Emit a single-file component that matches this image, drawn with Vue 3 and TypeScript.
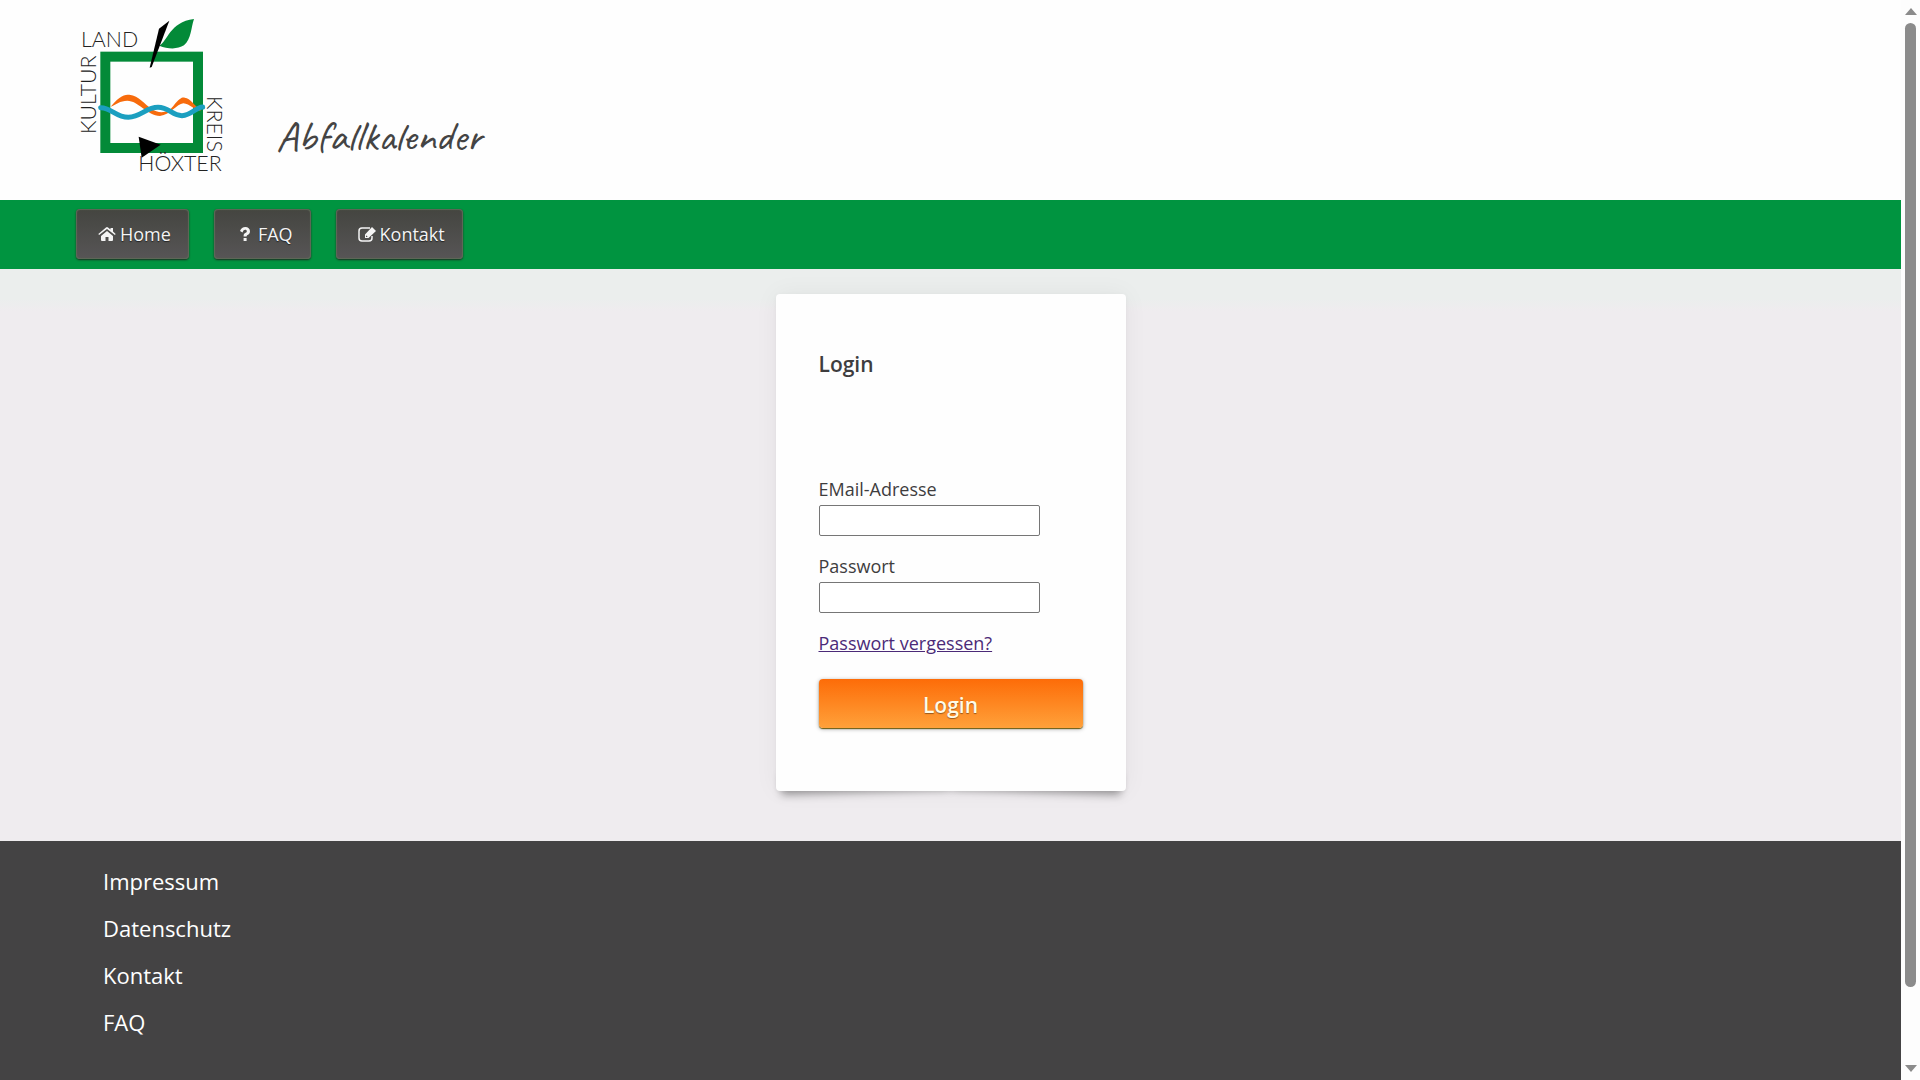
<script setup lang="ts">
import { ref } from 'vue'

interface NavItem {
  label: string
  icon: 'home' | 'question' | 'edit'
}

const navItems: NavItem[] = [
  { label: 'Home', icon: 'home' },
  { label: 'FAQ', icon: 'question' },
  { label: 'Kontakt', icon: 'edit' },
]

const footerLinks: string[] = ['Impressum', 'Datenschutz', 'Kontakt', 'FAQ']

const email = ref('')
const password = ref('')
</script>

<template>
  <div class="window">
    <div class="page">
      <header class="header">
        <svg class="logo" viewBox="24 30 498 510" role="img" aria-label="Kulturland Kreis Höxter">
          <rect x="136" y="170" width="278" height="274" fill="none" stroke="#038a38" stroke-width="30" />
          <path d="M298 137C322 126 328 66 402 57C393 82 394 118 372 136C352 149 323 147 298 137Z" fill="#038a38" />
          <path d="M328 62L297 86L269 203L275 201Z" fill="#000" />
          <path d="M152 320C180 286 194 284 208 284C238 288 252 312 274 326C296 342 324 340 340 318C358 296 364 292 374 293C392 296 402 314 424 334C402 330 390 312 370 310C350 312 332 344 300 348C262 346 234 302 202 302C180 302 168 314 152 320Z" fill="#f76b0c" />
          <path d="M122 323C152 322 168 352 205 352C244 350 258 322 294 322C328 322 336 347 366 347C396 346 406 322 428 321" fill="none" stroke="#1b9fc0" stroke-width="15" stroke-linecap="round" />
          <path d="M236 410L302 434L245 473Z" fill="#000" />
          <g class="logo-text">
            <text x="63" y="142">LAND</text>
            <text transform="translate(107 402) rotate(-90)">KULTUR</text>
            <text transform="translate(441 288) rotate(90)">KREIS</text>
            <text x="235" y="514">HÖXTER</text>
          </g>
        </svg>
        <h1 class="title">Abfallkalender</h1>
      </header>

      <nav class="nav">
        <a v-for="item in navItems" :key="item.label" class="nav-button" href="#">
          <svg v-if="item.icon === 'home'" class="icon" viewBox="0 0 18 18" aria-hidden="true">
            <path d="M9 6L15 11V15Q15 16 14 16H10.500V12H7.500V16H4Q3 16 3 15V11Z" />
            <path d="M8 2.500Q9 1.700 10 2.500L12.500 4.500V3H15V6.600L17.700 9L16.900 10L9 3.900L1.100 10L0.300 9Z" />
          </svg>
          <svg v-else-if="item.icon === 'question'" class="icon" viewBox="0 0 18 18" aria-hidden="true">
            <path d="M4 6C5 3.400 6.800 2 9.400 2C12 2 14 3.800 14 6.200C14 8.500 12.800 9.200 11.600 9.900C10.800 10.400 10.600 10.700 10.600 11.600H7.600V10.900C7.600 9.200 8.300 8.500 9.600 7.800C10.400 7.300 10.800 7 10.800 6.200C10.800 5.400 10.200 4.800 9.200 4.800C8 4.800 7.300 5.500 6.500 7.400ZM7.600 13H10.600V16H7.600Z" />
          </svg>
          <svg v-else class="icon" viewBox="0 0 18 18" aria-hidden="true">
            <path d="M12 3H4Q1 3 1 6V13Q1 16 4 16H11Q14 16 14 13V11" class="icon-line" />
            <path d="M14 2L18 6L10.500 13H7V9.500ZM8 10.200V12H9.800Z" fill-rule="evenodd" />
          </svg>
          <span>{{ item.label }}</span>
        </a>
      </nav>

      <main class="main">
        <form class="card" @submit.prevent>
          <h2 class="card-title">Login</h2>
          <label class="label" for="email">EMail-Adresse</label>
          <input id="email" v-model="email" class="field" type="email" />
          <label class="label" for="password">Passwort</label>
          <input id="password" v-model="password" class="field" type="password" />
          <a class="forgot" href="#">Passwort vergessen?</a>
          <button class="submit" type="submit">Login</button>
        </form>
      </main>

      <footer class="footer">
        <ul class="footer-list">
          <li v-for="link in footerLinks" :key="link">
            <a href="#">{{ link }}</a>
          </li>
        </ul>
      </footer>
    </div>

    <div class="scrollbar" aria-hidden="true">
      <svg class="arrow" viewBox="0 0 14 7"><path d="M7 0L13 7H1Z" /></svg>
      <div class="track"><div class="thumb"></div></div>
      <svg class="arrow" viewBox="0 0 14 7"><path d="M1 0H13L7 7Z" /></svg>
    </div>
  </div>
</template>

<style>
body {
  margin: 0;
}
</style>

<style scoped>
.window {
  display: flex;
  min-height: 100vh;
  font-family: 'Open Sans', 'Noto Sans', sans-serif;
  font-size: 18px;
  line-height: 24px;
  color: #3e3d3e;
  background: #fdfdfd;
}

.page {
  flex: 1;
  display: flex;
  flex-direction: column;
  min-width: 0;
  background: #efecef;
}

.header {
  display: flex;
  align-items: flex-end;
  gap: 42px;
  padding: 10px 68px 20px;
  background: #fefefe;
}

.logo {
  width: 166px;
  height: 170px;
}

.logo-text {
  font-family: Lato, 'Open Sans', sans-serif;
  font-size: 64px;
  font-weight: 300;
  fill: #222;
}

.title {
  margin: 0;
  padding-bottom: 20px;
  color: #444;
  font-family: Caveat, Lato, cursive;
  font-size: 43px;
  font-weight: 400;
  line-height: 48px;
}

.nav {
  display: flex;
  gap: 25px;
  padding: 9px 76px 10px;
  background: #009440;
}

.nav-button {
  display: flex;
  align-items: center;
  gap: 4px;
  height: 50px;
  padding: 0 18px 0 22px;
  border-radius: 4px;
  box-sizing: border-box;
  color: #f4f4f4;
  text-decoration: none;
  text-shadow: 0 1px 1px #222;
  background: linear-gradient(#444540, #575556);
  box-shadow: inset 0 0 1px 1px #5f6a58, 0 1px 2px #1d2a20;
}

.icon {
  width: 18px;
  height: 18px;
  fill: #f4f4f4;
}

.icon-line {
  fill: none;
  stroke: #f4f4f4;
  stroke-width: 1.5;
}

.main {
  position: relative;
  z-index: 0;
  display: flex;
  justify-content: center;
  padding: 25px 0 50px;
  background: linear-gradient(#ebeeed, #ebeeed 30px, #efecef 42px);
}

.card {
  position: relative;
  display: flex;
  flex-direction: column;
  align-items: flex-start;
  width: 350px;
  padding: 55px 43px 63px;
  border-radius: 4px;
  box-sizing: border-box;
  background: #fefefe;
  box-shadow: 0 1px 4px rgba(0, 0, 0, 0.04), 0 0 24px rgba(0, 0, 0, 0.05);
}

/* lifted corners under the card */
.card::before,
.card::after {
  content: '';
  position: absolute;
  z-index: -1;
  bottom: 8px;
  width: 48%;
  height: 20px;
  box-shadow: 0 9px 8px rgba(0, 0, 0, 0.35);
}

.card::before {
  left: 5px;
  transform: rotate(-2deg);
}

.card::after {
  right: 5px;
  transform: rotate(2deg);
}

.card-title {
  margin: 0 0 98px;
  font-size: 21px;
  font-weight: 600;
  line-height: 30px;
}

.label {
  margin-bottom: 4px;
}

.field {
  width: 221px;
  height: 31px;
  margin: 0 0 18px;
  padding: 2px 4px;
  border: 1px solid #767676;
  border-radius: 2px;
  box-sizing: border-box;
  background: #fff;
  font: inherit;
}

.forgot {
  color: #4b2a78;
}

.submit {
  align-self: stretch;
  height: 49px;
  margin-top: 24px;
  padding: 3px 0 0;
  border: 0;
  border-radius: 4px;
  color: #fffbe8;
  font-family: inherit;
  font-size: 21px;
  font-weight: 600;
  text-shadow: 0 1px 1px rgba(0, 0, 0, 0.4);
  background: linear-gradient(#fd6c08, #ffa13a);
  box-shadow: 0 1px 1px #6b5a10, 0 1px 4px rgba(0, 0, 0, 0.35);
}

.footer {
  flex: 1;
  padding: 17px 103px;
  background: #444344;
}

.footer-list {
  margin: 0;
  padding: 0;
  list-style: none;
  font-size: 22px;
  line-height: 47px;
}

.footer-list a {
  color: #fff;
  text-decoration: none;
}

.scrollbar {
  display: flex;
  flex-direction: column;
  align-items: center;
  width: 19px;
  padding: 8px 0;
  box-sizing: border-box;
}

.arrow {
  width: 14px;
  height: 7px;
  fill: #8b8b8b;
}

.track {
  flex: 1;
  display: flex;
  flex-direction: column;
  padding: 8px 0 78px;
}

.thumb {
  flex: 1;
  width: 11px;
  border-radius: 6px;
  background: #8b8b8b;
}
</style>
